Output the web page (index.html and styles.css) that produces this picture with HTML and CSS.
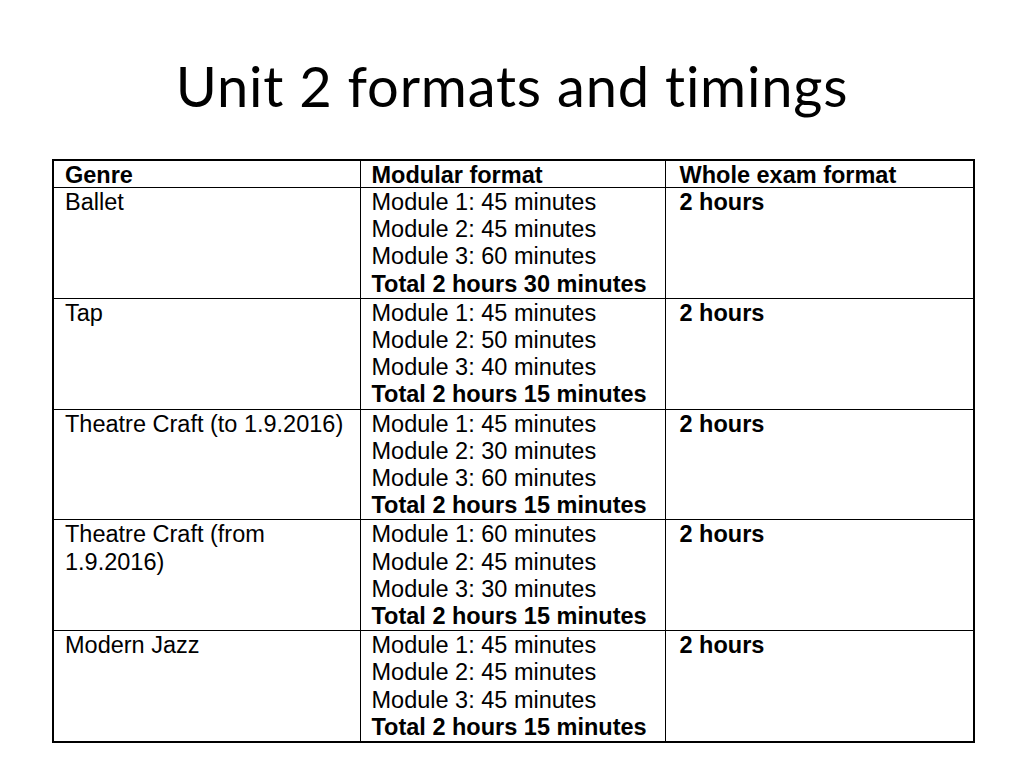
FILE: index.html
```html
<!DOCTYPE html>
<html>
<head>
<meta charset="utf-8">
<link rel="stylesheet" href="styles.css">
</head>
<body>
<div class="slide">
  <h1 class="title">Unit 2 formats and timings</h1>
  <table class="timings">
    <colgroup>
      <col class="c1"><col class="c2"><col class="c3">
    </colgroup>
    <thead>
      <tr class="head">
        <th>Genre</th>
        <th>Modular format</th>
        <th class="whole">Whole exam format</th>
      </tr>
    </thead>
    <tbody>
      <tr>
        <td class="genre">Ballet</td>
        <td>Module 1: 45 minutes<br>Module 2: 45 minutes<br>Module 3: 60 minutes<br><b>Total 2 hours 30 minutes</b></td>
        <td class="whole"><b>2 hours</b></td>
      </tr>
      <tr>
        <td class="genre">Tap</td>
        <td>Module 1: 45 minutes<br>Module 2: 50 minutes<br>Module 3: 40 minutes<br><b>Total 2 hours 15 minutes</b></td>
        <td class="whole"><b>2 hours</b></td>
      </tr>
      <tr>
        <td class="genre">Theatre Craft (to 1.9.2016)</td>
        <td>Module 1: 45 minutes<br>Module 2: 30 minutes<br>Module 3: 60 minutes<br><b>Total 2 hours 15 minutes</b></td>
        <td class="whole"><b>2 hours</b></td>
      </tr>
      <tr>
        <td class="genre">Theatre Craft (from<br>1.9.2016)</td>
        <td>Module 1: 60 minutes<br>Module 2: 45 minutes<br>Module 3: 30 minutes<br><b>Total 2 hours 15 minutes</b></td>
        <td class="whole"><b>2 hours</b></td>
      </tr>
      <tr>
        <td class="genre">Modern Jazz</td>
        <td>Module 1: 45 minutes<br>Module 2: 45 minutes<br>Module 3: 45 minutes<br><b>Total 2 hours 15 minutes</b></td>
        <td class="whole"><b>2 hours</b></td>
      </tr>
    </tbody>
  </table>
</div>
</body>
</html>
```

FILE: styles.css
```css
html, body {
  margin: 0;
  padding: 0;
  background: #ffffff;
}

.slide {
  width: 1024px;
  height: 768px;
  padding-top: 56px;
  box-sizing: border-box;
}

.title {
  margin: 0;
  font-family: Lato, "Open Sans", sans-serif;
  font-weight: 400;
  font-size: 56px;
  letter-spacing: 0.8px;
  line-height: 60px;
  text-align: center;
  color: #000000;
}

.timings {
  margin: 43px 0 0 52px;
  width: 921px;
  border-collapse: collapse;
  table-layout: fixed;
  border: 2px solid #000;
  font-family: "Liberation Sans", Arial, sans-serif;
  font-size: 23.5px;
  line-height: 27.2px;
  color: #000;
}

.c1 { width: 307px; }
.c2 { width: 305px; }
.c3 { width: 309px; }

.timings th,
.timings td {
  border: 1.5px solid #000;
  text-align: left;
  vertical-align: top;
  padding: 1px 4px 0 11px;
  white-space: nowrap;
}

.timings th {
  font-weight: 700;
  line-height: 24px;
  padding-top: 2px;
}

.timings .whole {
  padding-left: 14px;
}

.timings b {
  font-weight: 700;
}
```
